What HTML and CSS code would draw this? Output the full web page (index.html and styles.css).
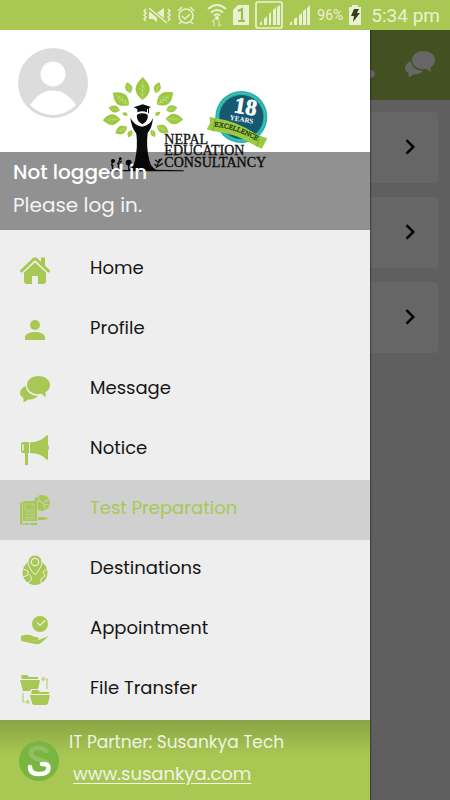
FILE: index.html
```html
<!DOCTYPE html>
<html lang="en">
<head>
<meta charset="utf-8">
<meta name="viewport" content="width=device-width, initial-scale=1">
<title>Nepal Education Consultancy</title>
<link rel="stylesheet" href="styles.css">
</head>
<body>
<svg class="defs" aria-hidden="true">
  <symbol id="bubbles" viewBox="0 0 30 30">
    <path d="M6 11C2.500 12.500 0 15 0 18c0 2 1.500 3.700 3.500 5 0 1.500.1 3 0 4.200 2.200-.6 3.500-1.700 4.400-2.700 4 .4 8.100-.8 10.400-3.900C11.500 21 6 17 6 11z"/>
    <path d="M18.500 1C11.600 1 7 5 7 10s4.600 9.100 11.500 9.100c1.200 0 2.300-.1 3.300-.4 1.300 1.500 2.600 2.700 4.400 3.600-.7-1.700-.8-3.500-.6-5.200C28.600 15.500 30 13 30 10 30 5 25.400 1 18.500 1z"/>
  </symbol>
  <symbol id="chevron" viewBox="0 0 16 16"><path d="M4 1l6 6-6 6" fill="none" stroke="#000" stroke-width="2.200"/></symbol>
  <symbol id="leaf" viewBox="-20 -35 40 70" overflow="visible">
    <path d="M0-35C14-20 22-10 21 4 19 18 10 25 0 35-10 25-19 18-21 4-22-10-14-20 0-35z" fill="#9bc83d"/>
    <path d="M0-22V35M0-4l7-8M0-4l-7-8M0 9l10-11M0 9l-10-11M0 21l8-9M0 21l-8-9" fill="none" stroke="#d9eab4" stroke-width="1.400"/>
  </symbol>
</svg>

<div class="screen">
  <header class="status">
    <svg width="28" height="22" viewBox="0 0 28 22" fill="#eaf1d3">
      <path d="M6 7h3l5 4v7l-4-3H6zM14 9l7-5v14l-7-5z"/>
      <path d="M5 4l19 15" stroke="#a9c853" stroke-width="4"/>
      <path d="M6 4l18 15M3 5l-2 2 2 2-2 2 2 2-2 2 2 2M25 5l2 2-2 2 2 2-2 2 2 2-2 2" fill="none" stroke="#eaf1d3" stroke-width="1.500"/>
    </svg>
    <svg class="alarm" width="18" height="22" viewBox="0 0 18 22" fill="none" stroke="#eaf1d3" stroke-width="1.500">
      <circle cx="9" cy="12" r="7"/><path d="M5 12l3 3 5-5M1 7l4-4M17 7l-4-4M4 18l-2 2M14 18l2 2"/>
    </svg>
    <svg width="20" height="24" viewBox="0 0 20 24" fill="none" stroke="#eaf1d3" stroke-width="2">
      <path d="M1 6Q10-2 19 6M4 9.500q6-5 12 0M7 12.500q3-2.500 6 0"/><circle cx="10" cy="15" r="1"/>
      <path d="M7 23v-6l-2 2M12 17v6l2-2" stroke="#cfe09f" stroke-width="1.500"/>
    </svg>
    <svg width="16" height="20" viewBox="0 0 16 20">
      <path d="M5 0h11v20H0V5z" fill="#eaf1d3"/><path d="M5 6l4-2v12M5 16h7" fill="none" stroke="#a0bb52" stroke-width="2.200"/>
    </svg>
    <svg class="sim" width="28" height="28" viewBox="0 0 28 28" fill="#eaf1d3">
      <rect x="1" y="1" width="26" height="26" rx="2" fill="none" stroke="#eaf1d3" stroke-width="1.700"/>
      <path d="M5 24v-2l2-2v4zM9 24v-6l3-3v9zM14 24V13l2-2v13zM18 24V9l3-3v18zM22 24V6l3-2v20z"/>
    </svg>
    <svg width="22" height="24" viewBox="0 0 22 24" fill="#eaf1d3">
      <path d="M1 22v-2l2-2v4zM5 22v-6l3-2v8zM10 22V12l3-2v12zM14 22V8l3-2v16zM18 22V5l3-3v20z"/>
    </svg>
    <span class="percent">96%</span>
    <svg width="12" height="20" viewBox="0 0 12 20"><path d="M3 0h6v2h3v18H0V2h3z" fill="#eaf1d3"/><path d="M5 4h5L8 8h3l-7 9 1-6H2z" fill="#35401b"/></svg>
    <span class="clock">5:34 pm</span>
  </header>

  <div class="stage">
    <main class="app">
      <div class="appbar">
        <button class="icon-btn" aria-label="Notifications"><svg width="30" height="30" viewBox="0 0 30 30" fill="#fff"><path d="M8 4h14v15H8z"/><ellipse cx="25" cy="24" rx="5" ry="4"/></svg></button>
        <button class="icon-btn" aria-label="Messages"><svg width="30" height="30" fill="#fff"><use href="#bubbles"/></svg></button>
      </div>
      <div class="cards">
        <button class="card" aria-label="Open first item"><svg width="18" height="18"><use href="#chevron"/></svg></button>
        <button class="card" aria-label="Open second item"><svg width="18" height="18"><use href="#chevron"/></svg></button>
        <button class="card" aria-label="Open third item"><svg width="18" height="18"><use href="#chevron"/></svg></button>
      </div>
    </main>
    <div class="scrim"></div>

    <aside class="drawer">
      <div class="profile">
        <svg class="avatar" width="70" height="70" viewBox="0 0 70 70">
          <circle cx="35" cy="35" r="35" fill="#dcdcdc"/><circle cx="35" cy="26" r="12.500" fill="#fff"/>
          <path d="M12 57C19 47 26 42.500 35 42.500S51 47 58 57C51 63.500 44 67 35 67S19 63.500 12 57z" fill="#fff"/>
        </svg>
        <svg class="logo" width="180" height="110" viewBox="0 0 540 330">
          <use href="#leaf" x="-20" y="-35" width="40" height="70" transform="translate(143 56)"/>
          <use href="#leaf" x="-20" y="-35" width="40" height="70" transform="translate(101 53) rotate(-20) scale(.5)"/>
          <use href="#leaf" x="-20" y="-35" width="40" height="70" transform="translate(187 53) rotate(20) scale(.5)"/>
          <use href="#leaf" x="-20" y="-35" width="40" height="70" transform="translate(78 87) rotate(-53) scale(.88)"/>
          <use href="#leaf" x="-20" y="-35" width="40" height="70" transform="translate(210 86) rotate(53) scale(.88)"/>
          <use href="#leaf" x="-20" y="-35" width="40" height="70" transform="translate(58 117) rotate(-75) scale(.5)"/>
          <use href="#leaf" x="-20" y="-35" width="40" height="70" transform="translate(230 116) rotate(75) scale(.5)"/>
          <use href="#leaf" x="-20" y="-35" width="40" height="70" transform="translate(90 132) rotate(-70) scale(.26)"/>
          <use href="#leaf" x="-20" y="-35" width="40" height="70" transform="translate(188 131) rotate(60) scale(.26)"/>
          <use href="#leaf" x="-20" y="-35" width="40" height="70" transform="translate(50 149) rotate(-93) scale(.76)"/>
          <use href="#leaf" x="-20" y="-35" width="40" height="70" transform="translate(238 147) rotate(93) scale(.76)"/>
          <use href="#leaf" x="-20" y="-35" width="40" height="70" transform="translate(79 180) rotate(-118) scale(.58)"/>
          <use href="#leaf" x="-20" y="-35" width="40" height="70" transform="translate(203 177) rotate(118) scale(.58)"/>
          <use href="#leaf" x="-20" y="-35" width="40" height="70" transform="translate(105 191) rotate(-155) scale(.35)"/>
          <use href="#leaf" x="-20" y="-35" width="40" height="70" transform="translate(174 190) rotate(155) scale(.35)"/>
          <path d="M116 112l27-9 25 8-6 3v16h-3v-14l-3 2v9q-14-6-29 0v-10z" fill="#0b0d0c"/>
          <path d="M126 134q16-8 32 0 4 17-16 29-20-12-16-29z" fill="#0b0d0c"/>
          <path d="M106 143q12 24 35 27 23-3 33-25-3 30-16 44-5 42 5 82 5 22 21 28l82 2v3H45v-3l54-1q17-7 21-29 9-43 4-80-15-19-18-48z" fill="#0b0d0c"/>
          <g fill="none" stroke="#171a18" stroke-width="4">
            <path d="M55 299q-7-14-2-27M48 284l8 4M72 299q-5-18 4-35M66 280l8 3M80 272l-6 6M101 299v-20"/>
            <path d="M184 294l10-27M181 270l10 8M201 265l-10 13M178 282l9 8M204 280l-16 9"/>
          </g>
          <circle cx="54" cy="273" r="6"/><circle cx="101" cy="278" r="9"/><circle cx="76" cy="266" r="4"/>
          <g class="logo-name"><text x="208" y="221">NEPAL</text><text x="208" y="254">EDUCATION</text><text x="208" y="290">CONSULTANCY</text></g>
          <circle cx="439" cy="141" r="78" fill="#24b1a7"/><circle cx="439" cy="141" r="71" fill="none" stroke="#b6e2d9" stroke-width="2" stroke-dasharray="3 3"/><circle cx="439" cy="141" r="66" fill="#15586f"/>
          <g transform="rotate(9 439 141)"><text class="years-num" x="447" y="131">18</text><text class="years" x="441" y="155">YEARS</text></g>
          <path d="M344 140l17 5q60 6 127 50l29 10-17 31-19-9q-61-38-128-44l-18-5 10-18z" fill="#9cca3f"/>
          <path d="M361 145l-8 38M493 198l-7 32" stroke="#6d9a2a" stroke-width="2"/>
          <path id="ribbon" d="M358 170q64 3 150 55" fill="none"/>
          <text class="excellence"><textPath href="#ribbon">EXCELLENCE</textPath></text>
        </svg>
        <div class="account"><strong>Not logged in</strong><span>Please log in.</span></div>
      </div>

      <nav class="menu">
        <a href="#home"><svg viewBox="0 0 30 30"><path d="M1.500 16L13.500 4.500q1.500-1.300 3 0L28.500 16" fill="none" stroke="#a9c853" stroke-width="3" stroke-linecap="round"/><path d="M21 2.500h4V12l-4-4zM4 17.500L15 7.500l11 10V26q0 3-3 3h-5v-8h-6v8H7q-3 0-3-3z"/></svg>Home</a>
        <a href="#profile"><svg viewBox="0 0 30 30"><circle cx="15" cy="10" r="5"/><path d="M5 25v-3c0-3 5-5 10-5s10 2 10 5v3z"/></svg>Profile</a>
        <a href="#message"><svg viewBox="0 0 30 30"><use href="#bubbles"/></svg>Message</a>
        <a href="#notice"><svg viewBox="0 0 30 30"><path d="M1 9q0-2 2-2h6v11h-1v12H5V18H3q-2 0-2-2zM10 7.500Q21 7 27 0q1 0 1 2v8q1 .5 1 2.500t-1 3V23q0 2-1 2-6-7-17-7z"/><path d="M3 9.500v6" stroke="#eee" stroke-width="1.500"/></svg>Notice</a>
        <a href="#test" class="active" aria-current="page"><svg viewBox="0 0 30 30"><circle cx="22" cy="8" r="8"/><path d="M15 7q4-3 8 2t1 7M18 1q0 4 3 6M23 8l6-4M24 10q3-2 6 1" fill="none" stroke="#d0d0d0" stroke-width=".9"/><path d="M0 8l4-2h13v20H3q-1.500 1 0 2h14v2H2q-2 0-2-3z"/><path d="M2.500 7v19M5 17h10M5 19.500h10M5 22h10M5 24h10M17.500 6v20" fill="none" stroke="#d0d0d0" stroke-width=".6"/><path d="M5 9h9v6H5z" fill="none" stroke="#d0d0d0" stroke-width=".6"/><path d="M18 22h8l3 1.500-3 1.500h-8z"/><path d="M26 22v3M2 29h3M9 28v2" stroke="#d0d0d0"/></svg>Test Preparation</a>
        <a href="#destinations"><svg viewBox="0 0 30 30"><circle cx="15" cy="17.500" r="12.500"/><path d="M3 14l5 2v4l-5 2M8 28l4-4-2-4M28 13l-5 4 2 4-4 3v4" fill="none" stroke="#eee"/><path d="M15 20q-7-8-7-13a7 7 0 0114 0q0 5-7 13z" stroke="#eee"/><circle cx="15" cy="7" r="3.700" stroke="#eee" stroke-width="1.200"/></svg>Destinations</a>
        <a href="#appointment"><svg viewBox="0 0 30 30"><circle cx="20" cy="9" r="8"/><path d="M17 7.500l3 3 5-5" fill="none" stroke="#eee" stroke-width="1.200"/><path d="M1 21q5-2 9-1l5 2q3 0 4 1l-1 2h-6q6 1 9-1l8-3-8 7q-3 2-6 1L1 26z"/></svg>Appointment</a>
        <a href="#files"><svg viewBox="0 0 30 30"><path d="M1 2q0-2 2-2h4l2 2h9v2H2zM0 5h20l-2 9H11l-1 2H3zM12 15h6l2 2h9v2H11zM10 20h20l-2 8q-.5 2-2 2H14q-1.500 0-2-2z"/><path d="M22 4h5v10M24 2l-2 2 2 2M3 18v9h6M7 25l2 2-2 2" fill="none" stroke="#b9d376" stroke-width="1.200"/></svg>File Transfer</a>
      </nav>

      <footer class="partner">
        <svg width="40" height="40" viewBox="0 0 40 40"><circle cx="20" cy="20" r="20" fill="#7ab541"/><path d="M28 12q-2-5-8-5-8 0-8 5.500 0 4 8 6 8 1.500 9 5" fill="none" stroke="#91bf61" stroke-width="4.500"/><path d="M11 26q0 7 9 7 10 0 9.500-7-.5-3-6.500-3" fill="none" stroke="#fff" stroke-width="4.500" stroke-linecap="round"/></svg>
        <div class="partner-text"><span>IT Partner: Susankya Tech</span><a href="#partner">www.susankya.com</a></div>
      </footer>
    </aside>
  </div>
</div>
</body>
</html>
```
FILE: styles.css
```css
* { box-sizing: border-box; }
body { margin: 0; font-family: "Poppins", Inter, sans-serif; color: #161616; }
button { border: 0; font: inherit; }
.defs { position: absolute; width: 0; height: 0; }
.screen { min-height: 100vh; display: grid; grid-template-rows: 30px 1fr; }

.status { display: flex; align-items: center; justify-content: flex-end; gap: 6px; padding-right: 10px; background: #a9c853; color: #eaf1d3; font-family: Roboto, sans-serif; white-space: nowrap; }
.status svg { flex: none; }
.alarm { margin-right: 6px; }
.percent { font-size: 14px; }
.clock { margin-left: 4px; font-size: 19px; }

.stage { display: grid; }
.app, .scrim, .drawer { grid-area: 1 / 1; }
.app { background: #eee; }
.scrim { background: rgb(0 0 0 / 60%); }
.appbar { height: 70px; display: flex; align-items: center; justify-content: flex-end; gap: 30px; padding-right: 15px; background: #a9c853; }
.icon-btn { display: flex; padding: 0; background: none; }
.cards { display: grid; gap: 14px; padding: 12px; }
.card { height: 71px; display: flex; align-items: center; justify-content: flex-end; padding: 0 18px; border-radius: 4px; background: #fff; }

.drawer { width: calc(100% - 80px); display: flex; flex-direction: column; background: #eee; box-shadow: 0 0 2px #000; clip-path: inset(0 -4px 0 0); }
.profile { position: relative; height: 200px; display: flex; align-items: flex-start; gap: 7px; padding-left: 18px; background: #fff; }
.avatar { flex: none; margin-top: 18px; }
.logo { flex: none; margin-top: 40px; }
.logo-name { font-family: "Liberation Serif", serif; font-size: 42px; fill: #111; stroke: #111; stroke-width: 1px; }
.years-num { font: bold 68px "Liberation Serif", serif; fill: #fff; stroke: #fff; stroke-width: 2px; text-anchor: middle; }
.years { font: bold 21px "Liberation Serif", serif; fill: #fff; text-anchor: middle; }
.excellence { font: 21px "Liberation Serif", serif; fill: #1c3b20; stroke: #1c3b20; stroke-width: 1px; }
.account { position: absolute; inset: auto 0 0; height: 78px; padding: 4px 13px; display: flex; flex-direction: column; background: rgb(0 0 0 / 43%); color: #fff; font-size: 20px; line-height: 33px; }
.account strong { font-weight: 500; }
.account span { color: #f4f4f4; }

.menu { flex: 1; padding-top: 10px; }
.menu a { height: 60px; display: flex; align-items: center; gap: 40px; padding: 0 20px 6px; color: inherit; font-size: 18px; text-decoration: none; }
.menu svg { width: 30px; height: 30px; margin-top: 6px; fill: #a9c853; overflow: visible; }
.menu .active { background: #d0d0d0; color: #a9c853; }

.partner { height: 81px; display: flex; align-items: center; gap: 10px; padding: 0 19px; background: linear-gradient(#89a443, #a9c853 36px); color: #f0f3e5; font-size: 18px; line-height: 31px; }
.partner svg { flex: none; }
.partner-text { display: flex; flex-direction: column; padding-bottom: 6px; }
.partner-text span { font-size: 17px; }
.partner a { padding-left: 4px; color: inherit; text-underline-offset: 3px; }
```
